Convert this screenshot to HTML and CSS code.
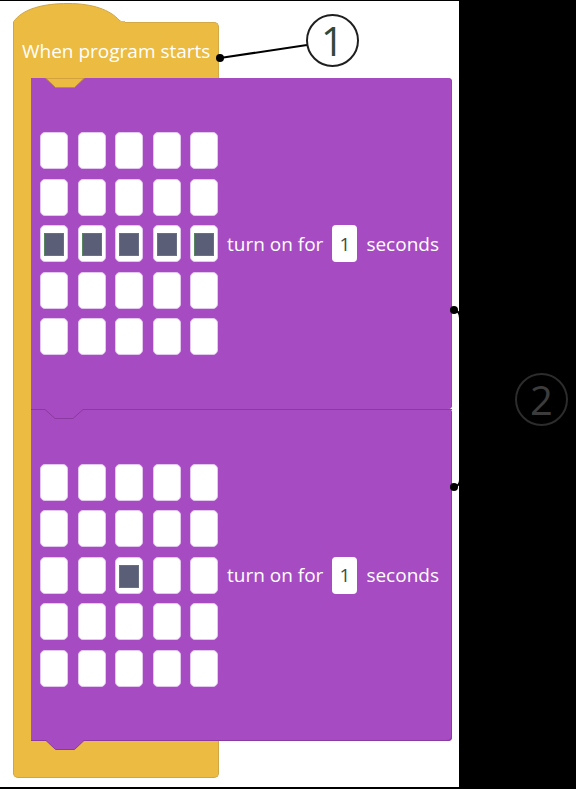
FILE: index.html
```html
<!DOCTYPE html>
<html>
<head>
<meta charset="utf-8">
<link rel="stylesheet" href="styles.css">
</head>
<body>
<div class="stage">
  <div class="event">
    <svg class="hat" width="112" height="20" viewBox="0 0 112 20"><path d="M0.5,20 L0.5,19 C9,6 30,0.5 55,0.5 C80,0.5 97,7 106,17 Q108,19.5 112,19.5 L112,20 Z" fill="#ecbb41" stroke="#cfa545" stroke-width="1"/><rect x="1" y="18" width="111" height="2" fill="#ecbb41"/></svg>
    <div class="event-head"><span>When program starts</span></div>
    <div class="event-body">
      <div class="arm"></div>
      <div class="stack">
        <div class="block">
          <svg class="tab-in" width="40" height="11" viewBox="0 0 40 11"><path d="M0.5,0 L10.5,9.5 H29.5 L39.5,0 Z" fill="#ecbb41" stroke="#b88a3a" stroke-width="1"/></svg>
          <div class="leds">
            <i class="cell"></i><i class="cell"></i><i class="cell"></i><i class="cell"></i><i class="cell"></i>
            <i class="cell"></i><i class="cell"></i><i class="cell"></i><i class="cell"></i><i class="cell"></i>
            <i class="cell on"><b class="led"></b></i><i class="cell on"><b class="led"></b></i><i class="cell on"><b class="led"></b></i><i class="cell on"><b class="led"></b></i><i class="cell on"><b class="led"></b></i>
            <i class="cell"></i><i class="cell"></i><i class="cell"></i><i class="cell"></i><i class="cell"></i>
            <i class="cell"></i><i class="cell"></i><i class="cell"></i><i class="cell"></i><i class="cell"></i>
          </div>
          <div class="label"><span>turn on for</span><span class="num">1</span><span>seconds</span></div>
        </div>
        <div class="block second">
          <svg class="seam" width="421" height="11" viewBox="0 0 421 11"><path d="M0,0.5 H14 L24,9.5 H42 L52,0.5 H421" fill="none" stroke="#8a3aa0" stroke-width="1"/></svg>
          <div class="leds">
            <i class="cell"></i><i class="cell"></i><i class="cell"></i><i class="cell"></i><i class="cell"></i>
            <i class="cell"></i><i class="cell"></i><i class="cell"></i><i class="cell"></i><i class="cell"></i>
            <i class="cell"></i><i class="cell"></i><i class="cell on"><b class="led"></b></i><i class="cell"></i><i class="cell"></i>
            <i class="cell"></i><i class="cell"></i><i class="cell"></i><i class="cell"></i><i class="cell"></i>
            <i class="cell"></i><i class="cell"></i><i class="cell"></i><i class="cell"></i><i class="cell"></i>
          </div>
          <div class="label"><span>turn on for</span><span class="num">1</span><span>seconds</span></div>
          <svg class="tab-out" width="40" height="11" viewBox="0 0 40 11"><path d="M0.5,0 L10.5,9.5 H29.5 L39.5,0" fill="#a64bc2" stroke="#8a3aa0" stroke-width="1"/></svg>
        </div>
      </div>
    </div>
    <div class="event-foot"></div>
  </div>
</div>
<div class="panel"></div>

<svg class="marks" width="576" height="789" viewBox="0 0 576 789">
  <line x1="220" y1="58" x2="307" y2="45" stroke="#000" stroke-width="2"/>
  <circle cx="220" cy="58" r="4" fill="#000"/>
  <path d="M454,310 Q460,311 460,318 V480 Q460,486 454,487" fill="none" stroke="#000" stroke-width="2"/>
  <circle cx="454" cy="310" r="4" fill="#000"/>
  <circle cx="454" cy="487" r="4" fill="#000"/>
</svg>
<div class="callout one">1</div>
<div class="callout two">2</div>
</body>
</html>
```
FILE: styles.css
```css
html, body {
  margin: 0;
  padding: 0;
}
body {
  position: relative;
  width: 576px;
  height: 789px;
  background: #000;
  display: flex;
  align-items: flex-start;
  overflow: hidden;
  font-family: "Open Sans", "Noto Sans", sans-serif;
}
.stage {
  width: 459px;
  height: 786px;
  margin-top: 1px;
  padding-top: 2px;
  box-sizing: border-box;
  background: #fff;
}
.panel {
  flex: 1;
}
.event {
  margin-left: 13px;
  display: flex;
  flex-direction: column;
  align-items: flex-start;
}
.hat {
  display: block;
  margin-bottom: -1px;
  position: relative;
  z-index: 1;
}
.event-head {
  width: 206px;
  height: 56px;
  background: #ecbb41;
  border-radius: 0 5px 0 0;
  border-left: 1px solid #cfa545;
  border-right: 1px solid #d3a846;
  border-top: 1px solid #d3a846;
  box-sizing: border-box;
  display: flex;
  align-items: center;
  padding-left: 8px;
  padding-top: 1px;
  color: #fff;
  font-size: 19px;
}
.event-body {
  display: flex;
}
.arm {
  width: 18px;
  background: #ecbb41;
  border-left: 1px solid #cfa545;
  box-sizing: border-box;
}
.stack {
  width: 421px;
}
.event-foot {
  width: 206px;
  height: 37px;
  background: #ecbb41;
  border: 1px solid #cfa545;
  border-top: none;
  border-radius: 0 0 5px 5px;
  box-sizing: border-box;
}
.block {
  position: relative;
  height: 331px;
  background: #a64bc2;
  border-radius: 0 4px 4px 0;
  box-shadow: inset -1px 0 0 #9442ac;
  display: flex;
  align-items: center;
  gap: 9px;
  padding-left: 9px;
  box-sizing: border-box;
}
.block.second {
  height: 332px;
  box-shadow: inset -1px -1px 0 #8a3aa0;
}
.tab-in {
  position: absolute;
  left: 14px;
  top: 0;
}
.seam {
  position: absolute;
  left: 0;
  top: 0;
}
.tab-out {
  position: absolute;
  left: 14px;
  top: 100%;
  margin-top: -1px;
}
.leds {
  display: grid;
  grid-template-columns: repeat(5, 28px);
  grid-auto-rows: 37px;
  column-gap: 9.5px;
  row-gap: 9.5px;
}
.cell {
  display: flex;
  background: #fff;
  border: 1px solid #e2c8ee;
  border-radius: 5px;
  box-sizing: border-box;
  padding: 7px 3px 5px;
}
.led {
  flex: 1;
  background: #5a5e76;
  border: 1px solid #55845f;
  border-top-color: #6a6e82;
  border-right-color: #6a6e82;
}
.label {
  display: flex;
  align-items: center;
  gap: 9px;
  color: #fff;
  font-size: 19px;
}
.num {
  width: 25px;
  height: 37px;
  background: #fff;
  border-radius: 4px;
  color: #3f4b46;
  display: flex;
  align-items: center;
  justify-content: center;
}
.marks {
  position: absolute;
  left: 0;
  top: 0;
  pointer-events: none;
}
.callout {
  position: absolute;
  width: 49px;
  height: 49px;
  border-radius: 50%;
  display: flex;
  align-items: center;
  justify-content: center;
  font-family: "Open Sans", sans-serif;
  font-size: 40px;
  line-height: 1;
}
.callout.one {
  left: 306px;
  top: 14px;
  border: 2px solid #1f1f1f;
  color: #2f4a39;
  background: #fff;
}
.callout.two {
  left: 515px;
  top: 373px;
  border: 2px solid #2c2c2c;
  color: #3c3c3c;
}
```
